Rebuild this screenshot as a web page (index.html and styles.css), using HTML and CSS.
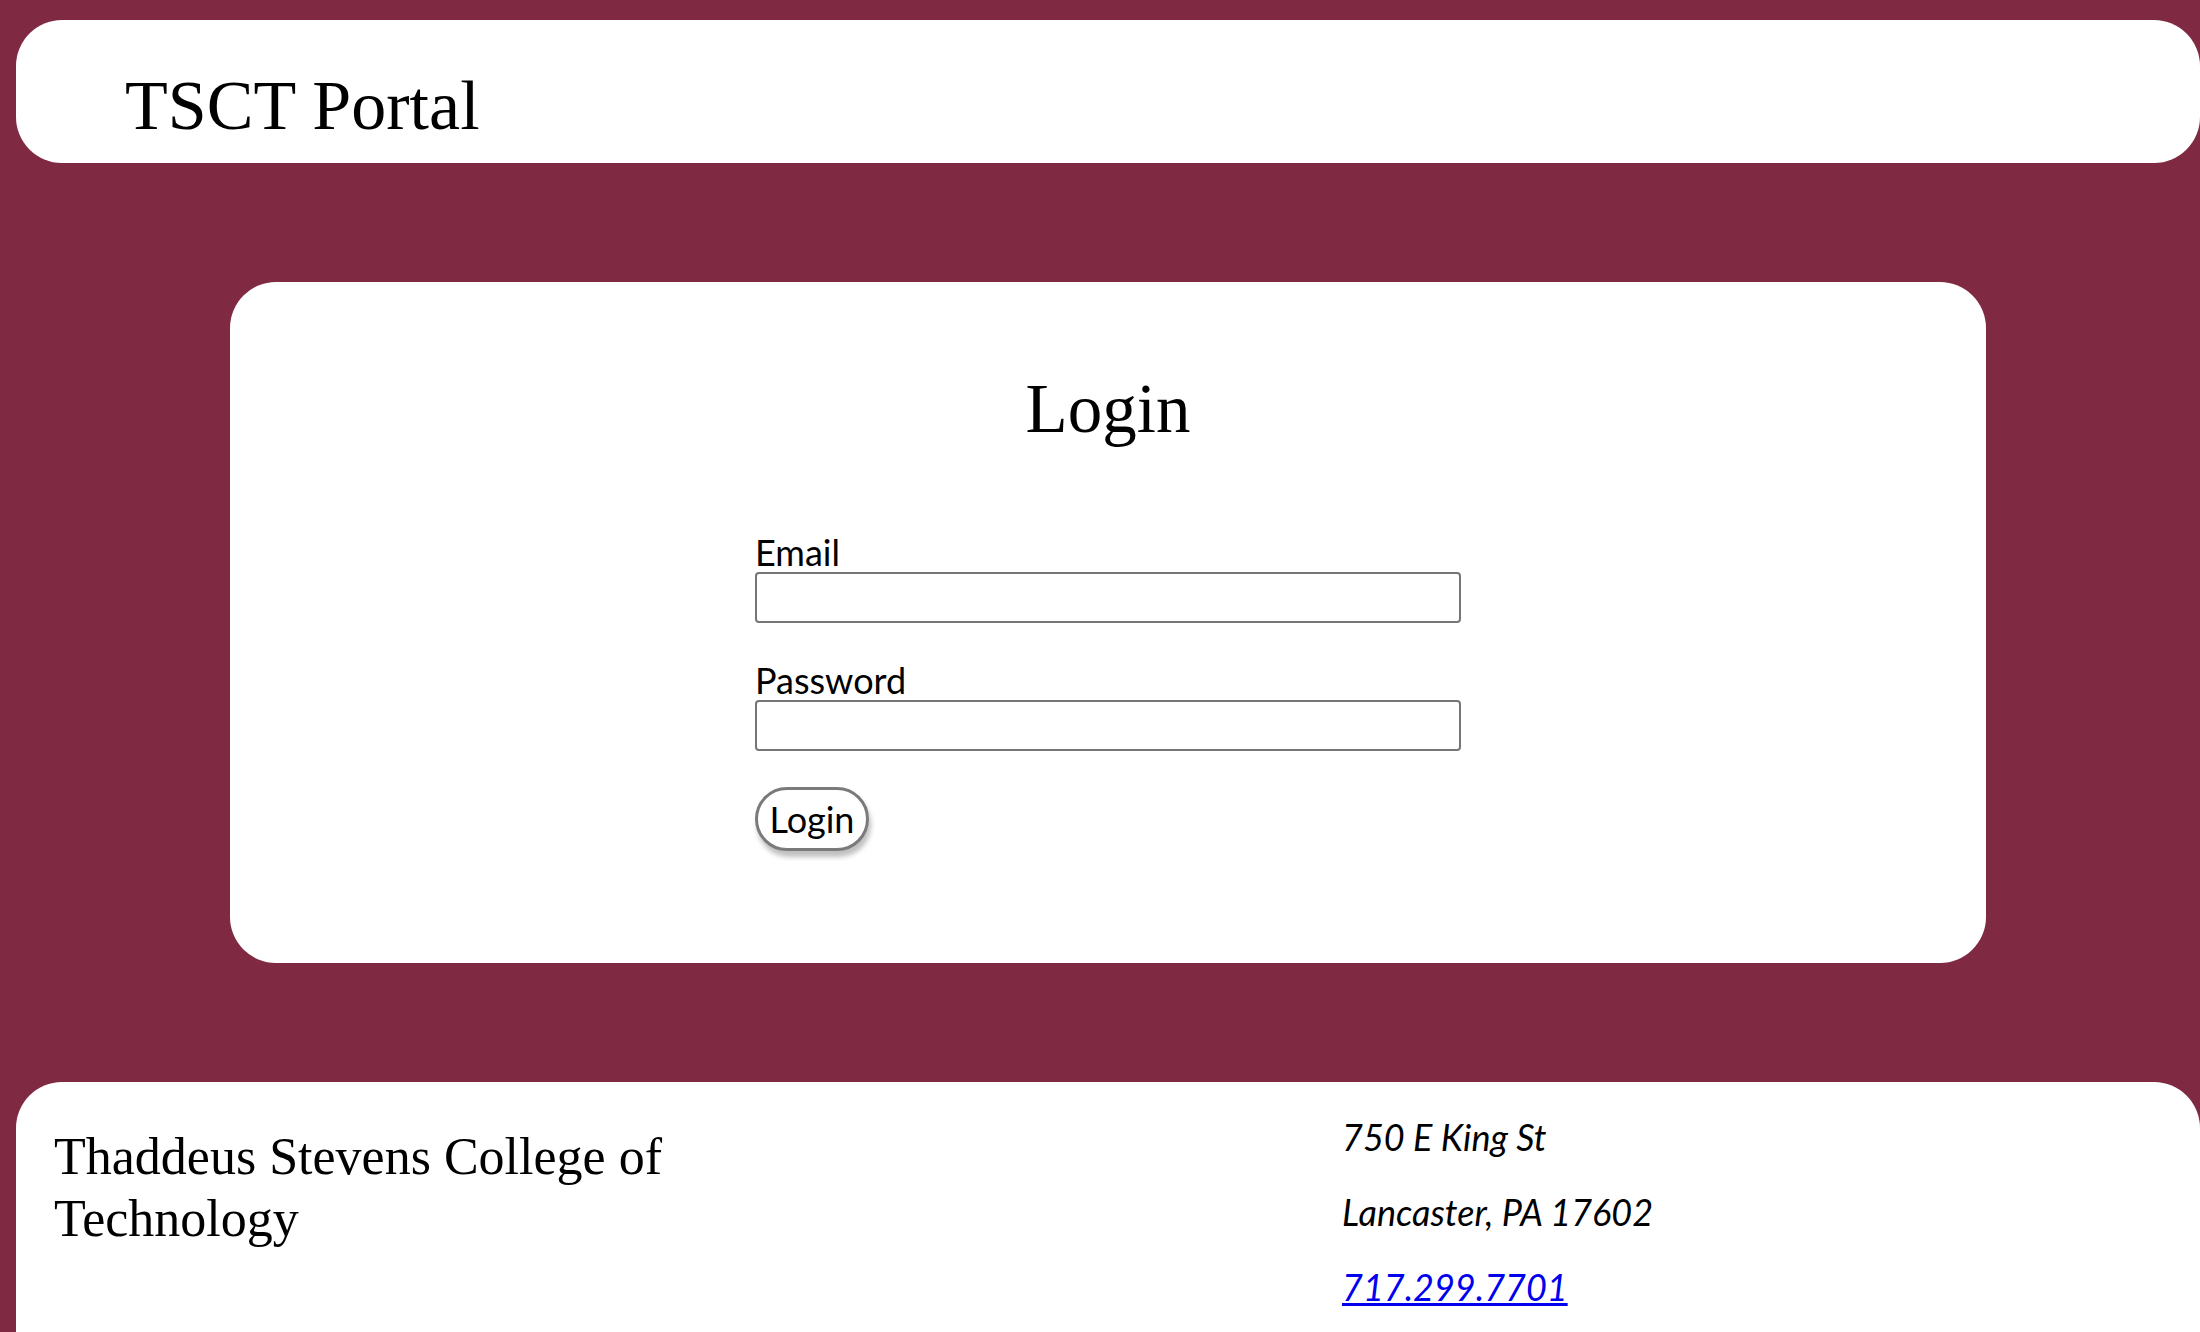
FILE: index.html
```html
<!DOCTYPE html>
<html lang="en">
<head>
<meta charset="utf-8">
<title>TSCT Portal</title>
<link rel="stylesheet" href="styles.css">
</head>
<body>
  <header class="site-header">
    <h1 class="site-title">TSCT Portal</h1>
  </header>

  <main class="login-card">
    <h2 class="login-title">Login</h2>
    <form class="login-form">
      <label class="field-label" for="email">Email</label>
      <input class="field-input" type="email" id="email">
      <label class="field-label field-label-gap" for="password">Password</label>
      <input class="field-input" type="password" id="password">
      <button class="login-button" type="button">Login</button>
    </form>
  </main>

  <footer class="site-footer">
    <div class="footer-name">Thaddeus Stevens College of Technology</div>
    <div class="footer-address">
      <p class="addr-line">750 E King St</p>
      <p class="addr-line">Lancaster, PA 17602</p>
      <p class="addr-line"><a class="addr-link" href="#">717.299.7701</a></p>
    </div>
  </footer>
</body>
</html>
```

FILE: styles.css
```css
html, body {
  margin: 0;
  padding: 0;
  overflow: hidden;
}

body {
  background: #7f2943;
  width: 2200px;
  height: 1332px;
  font-family: "Lato", "Liberation Sans", sans-serif;
  color: #000;
}

.site-header {
  margin: 20px 0 0 16px;
  width: 2184px;
  height: 143px;
  box-sizing: border-box;
  background: #fff;
  border-radius: 46px;
  padding: 46px 0 0 109px;
}

.site-title {
  margin: 0;
  font-family: "Liberation Serif", "Times New Roman", serif;
  font-weight: normal;
  font-size: 70px;
  line-height: 80px;
}

.login-card {
  margin: 119px 0 0 230px;
  width: 1756px;
  height: 681px;
  box-sizing: border-box;
  background: #fff;
  border-radius: 46px;
  padding-top: 87px;
}

.login-title {
  margin: 0;
  text-align: center;
  font-family: "Liberation Serif", "Times New Roman", serif;
  font-weight: normal;
  font-size: 69px;
  line-height: 80px;
}

.login-form {
  margin: 83px 0 0 525px;
  width: 706px;
  display: flex;
  flex-direction: column;
  align-items: flex-start;
}

.field-label {
  font-size: 36px;
  line-height: 40px;
  height: 40px;
}

.field-label-gap {
  margin-top: 37px;
}

.field-input {
  width: 706px;
  height: 51px;
  box-sizing: border-box;
  border: 2px solid #767676;
  border-radius: 4px;
  margin: 0;
  background: #fff;
}

.login-button {
  margin-top: 36px;
  width: 114px;
  height: 64px;
  box-sizing: border-box;
  border: 3px solid #7a7a7a;
  border-radius: 34px;
  background: #fff;
  font-family: "Lato", "Liberation Sans", sans-serif;
  font-size: 36px;
  color: #000;
  padding: 0;
  box-shadow: 2px 6px 5px rgba(0, 0, 0, 0.25);
}

.site-footer {
  margin: 119px 0 0 16px;
  width: 2184px;
  height: 320px;
  box-sizing: border-box;
  background: #fff;
  border-radius: 46px;
  display: flex;
  align-items: flex-start;
}

.footer-name {
  margin: 44px 0 0 38px;
  width: 700px;
  font-family: "Liberation Serif", "Times New Roman", serif;
  font-size: 52px;
  line-height: 62px;
}

.footer-address {
  margin: 1px 0 0 588px;
}

.addr-line {
  margin: 34px 0;
  font-style: italic;
  font-size: 36px;
  line-height: 41px;
}

.addr-link {
  color: #0000ee;
}
```
